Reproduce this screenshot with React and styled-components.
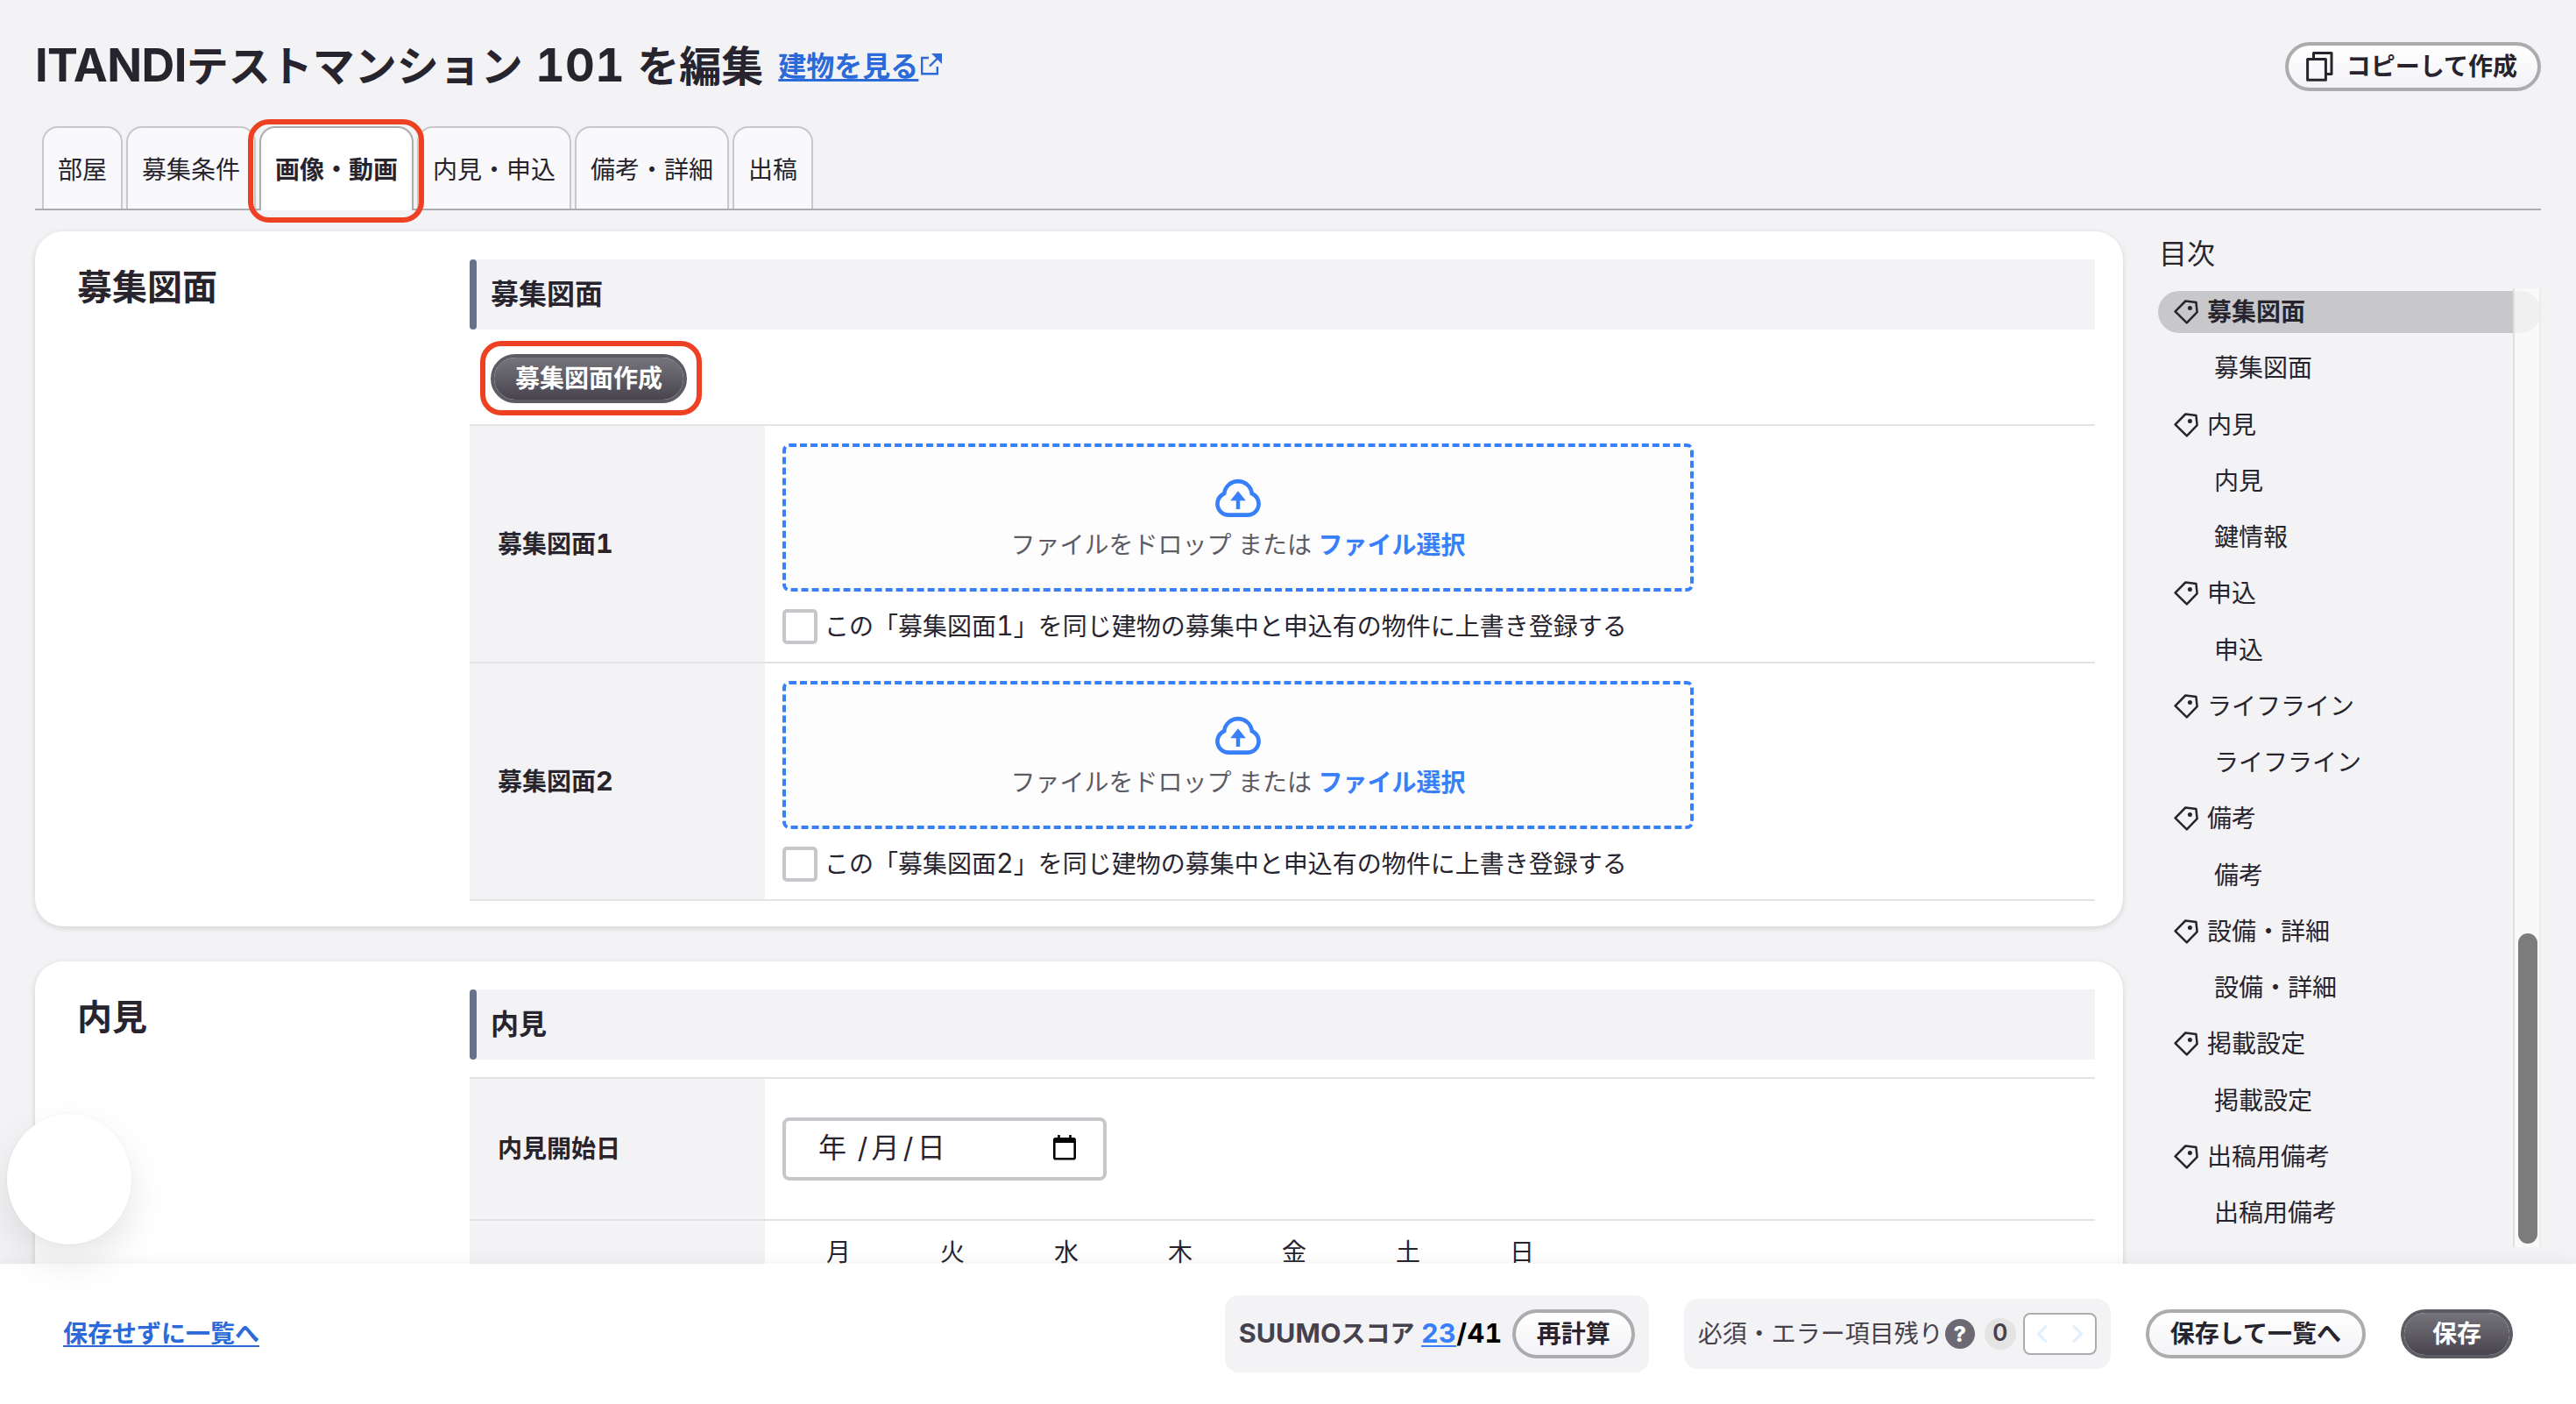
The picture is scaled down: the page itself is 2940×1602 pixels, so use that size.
import React from 'react';
import styled, { createGlobalStyle, css } from 'styled-components';

const colors = {
  text: '#27242e',
  muted: '#45424d',
  bg: '#f3f3f5',
  line: '#e3e3e5',
  border: '#acacae',
  inputBorder: '#c6c6cb',
  link: '#2b6ad8',
  blue: '#387ffa',
  mark: '#ee4023',
};

const GlobalStyle = createGlobalStyle`
  * {
    box-sizing: border-box;
  }
  body {
    margin: 0;
    background: ${colors.bg};
    color: ${colors.text};
    font-family: Inter, 'Noto Sans CJK JP', sans-serif;
    font-size: 28px;
    line-height: 40px;
    font-variant-numeric: tabular-nums;
  }
`;

const Page = styled.div`
  position: relative;
  display: flex;
  flex-direction: column;
  width: 2940px;
  height: 1602px;
  overflow: hidden;
`;

const Header = styled.header`
  display: flex;
  align-items: center;
  justify-content: space-between;
  padding: 48px 40px 40px;
`;

const Title = styled.h1`
  display: flex;
  align-items: center;
  gap: 17px;
  margin: 0;
  font-size: 48px;
  line-height: 56px;
  font-weight: 700;
  white-space: pre;
`;

// Latin letters and digits are drawn a little larger than the kana beside them
const Latin = styled.span`
  font-size: 1.09em;
  line-height: 1;
  letter-spacing: ${props => props.$spacing || 0}px;
`;

const TextLink = styled.a`
  color: ${props => props.$color || colors.link};
  font-size: ${props => props.$size || 28}px;
  font-weight: 700;
  text-decoration: underline;
  text-decoration-thickness: ${props => props.$thickness || 2}px;
  text-decoration-skip-ink: none;
  text-underline-offset: ${props => props.$offset || 3}px;
`;

const BuildingLink = styled.span`
  display: flex;
  align-items: center;
  gap: 3px;
  svg {
    margin-top: -6px;
  }
`;

const Button = styled.button`
  display: inline-flex;
  align-items: center;
  justify-content: center;
  height: 56px;
  min-width: 128px;
  padding: 0 24px;
  border: 4px solid ${colors.border};
  border-radius: 28px;
  background: linear-gradient(#ffffff, #f3f3f6) padding-box;
  color: ${colors.text};
  font: inherit;
  font-weight: 700;
  line-height: 40px;
  white-space: nowrap;
  svg {
    margin-right: 15px;
    margin-left: -4px;
  }
  ${props => props.$icon && 'padding-right: 23px;'}
  ${props => props.$dark && css`
    border-color: #5d5b63;
    background: linear-gradient(#76747b, #48444e) padding-box;
    color: #fff;
  `}
`;

const Tabs = styled.nav`
  position: relative;
  z-index: 1;
  display: flex;
  gap: 4px;
  height: 96px;
  margin: 0 40px;
  padding-left: 8px;
  border-bottom: 2px solid ${colors.border};
`;

const Tab = styled.div`
  display: flex;
  align-items: center;
  height: 94px;
  padding: 3px 16px 0;
  border: 2px solid #c8c8cb;
  border-bottom: 0;
  border-radius: 18px 18px 0 0;
  background: #f9f9fb;
  white-space: nowrap;
  ${props => props.$active && css`
    position: relative;
    z-index: 1;
    height: 96px;
    padding-top: 1px;
    border-color: ${colors.border};
    background: #fff;
    font-weight: 700;
  `}
`;

const Mark = styled.span`
  position: absolute;
  inset: ${props => props.$inset};
  border: 6px solid ${colors.mark};
  border-radius: 24px;
  pointer-events: none;
`;

const Body = styled.div`
  display: flex;
  flex: 1;
  gap: 40px;
  min-height: 0;
  padding: 24px 40px 0;
  overflow: hidden;
`;

const Sections = styled.main`
  display: flex;
  flex-direction: column;
  gap: 40px;
  width: 2383px;
`;

const Card = styled.section`
  display: flex;
  flex-shrink: 0;
  padding: 32px 32px 29px 48px;
  border-radius: 32px;
  background: #fff;
  box-shadow: 0 2px 6px rgba(39, 36, 46, 0.16);
`;

const CardTitle = styled.h2`
  width: 448px;
  margin: 0;
  padding-top: 4px;
  font-size: 40px;
  line-height: 56px;
`;

const CardContent = styled.div`
  flex: 1;
`;

const GroupTitle = styled.h3`
  display: flex;
  align-items: center;
  height: 80px;
  margin: 0;
  background: ${colors.bg};
  font-size: 32px;
  &::before {
    content: '';
    width: 8px;
    height: 80px;
    margin-right: 16px;
    border-radius: 4px;
    background: #68718b;
  }
`;

const GroupAction = styled.div`
  padding: 28px 24px 24px;
  line-height: 0;
`;

const Marked = styled.span`
  position: relative;
  display: inline-flex;
`;

const Table = styled.div`
  margin-top: ${props => props.$top || 0}px;
  border-top: 2px solid ${colors.line};
`;

const Row = styled.div`
  display: flex;
  border-bottom: 2px solid ${colors.line};
`;

const RowLabel = styled.div`
  display: flex;
  align-items: center;
  width: 337px;
  padding-left: 32px;
  background: ${colors.bg};
  font-weight: 700;
`;

const RowValue = styled.div`
  display: flex;
  flex: 1;
  flex-direction: column;
  align-items: flex-start;
  justify-content: center;
  gap: 20px;
  min-height: ${props => props.$height || 0}px;
  padding: 20px;
`;

const DropZone = styled.div`
  display: flex;
  flex-direction: column;
  align-items: center;
  gap: 12px;
  width: 1040px;
  height: 169px;
  padding-top: 36px;
  border: 4px dashed ${colors.blue};
  border-radius: 8px;
  background: #fdfdfe;
  color: #5d5b63;
  white-space: pre;
  b {
    color: ${colors.blue};
  }
`;

const CheckLabel = styled.label`
  display: flex;
  align-items: center;
  gap: 8px;
  white-space: nowrap;
`;

const CheckBox = styled.span`
  width: 40px;
  height: 40px;
  border: 4px solid ${colors.inputBorder};
  border-radius: 5px;
  background: #fff;
`;

const DateInput = styled.div`
  display: flex;
  align-items: center;
  justify-content: space-between;
  width: 370px;
  height: 72px;
  padding: 0 31px 3px 37px;
  border: 4px solid ${colors.inputBorder};
  border-radius: 8px;
  font-size: 32px;
  white-space: pre;
`;

const Slash = styled.span`
  display: inline-block;
  width: 20px;
  text-align: center;
`;

const Weekdays = styled.div`
  display: grid;
  grid-template-columns: repeat(7, 130px);
  text-align: center;
  margin-left: -1px;
  margin-top: -4px;
`;

const Toc = styled.aside`
  flex: 1;
`;

const TocTitle = styled.div`
  height: 41px;
  padding: 4px 1px 0;
  font-size: 32px;
  line-height: 44px;
`;

const TocScroll = styled.div`
  position: relative;
  height: 1094px;
  margin-top: 24px;
  padding-top: 3px;
`;

const TocList = styled.ul`
  display: flex;
  flex-direction: column;
  gap: 16px;
  margin: 0;
  padding: 0;
  list-style: none;
`;

const TocItem = styled.li`
  display: flex;
  align-items: center;
  gap: 10px;
  height: 48.25px;
  padding-left: ${props => (props.$child ? 64 : 18)}px;
  border-radius: 24px;
  background: ${props => (props.$active ? '#c8c8ca' : 'none')};
  font-weight: ${props => (props.$active ? 700 : 400)};
`;

const ScrollTrack = styled.div`
  position: absolute;
  top: 0;
  right: 0;
  width: 32px;
  height: 100%;
  padding: 736px 0 0 4px;
  border-left: 2px solid #dfdfe0;
  border-right: 2px solid #ececed;
  background: rgba(250, 250, 250, 0.8);
  &::before {
    content: '';
    display: block;
    width: 22px;
    height: 354px;
    border-radius: 11px;
    background: #7c7c7c;
  }
`;

const Footer = styled.footer`
  position: relative;
  display: flex;
  align-items: center;
  gap: 40px;
  height: 160px;
  padding: 0 72px;
  background: #fff;
  box-shadow: 0 0 16px rgba(39, 36, 46, 0.08);
`;

const Spacer = styled.div`
  flex: 1;
`;

const Panel = styled.div`
  display: flex;
  align-items: center;
  height: ${props => props.$height}px;
  padding: 0 16px;
  border-radius: 16px;
  background: ${colors.bg};
  color: ${colors.muted};
  white-space: pre;
`;

const Score = styled.span`
  width: 312px;
  font-weight: 700;
  em {
    color: #000;
    font-style: normal;
  }
`;

const Help = styled.span`
  display: grid;
  place-items: center;
  width: 34px;
  height: 34px;
  margin: 0 11px 0 2px;
  border-radius: 50%;
  background: #6c6973;
  color: #fff;
  font-size: 25px;
  line-height: 32px;
  font-weight: 800;
`;

const Count = styled.span`
  display: grid;
  place-items: start center;
  width: 36px;
  height: 36px;
  margin-right: 8px;
  border-radius: 50%;
  background: #e4e4e5;
  font-size: 27px;
  line-height: 34px;
  font-weight: 600;
`;

const Pager = styled.span`
  display: flex;
  align-items: center;
  justify-content: space-between;
  width: 84px;
  height: 48px;
  padding: 0 13px;
  border: 2px solid ${colors.border};
  border-radius: 8px;
  background: #fff;
`;

const FloatingButton = styled.div`
  position: absolute;
  left: 8px;
  top: 1271px;
  width: 142px;
  height: 149px;
  border-radius: 50%;
  background: #fff;
  box-shadow: 0 20px 44px rgba(0, 0, 0, 0.1), 0 0 3px rgba(0, 0, 0, 0.05);
`;

const ExternalIcon = () => (
  <svg width="24" height="25" viewBox="0 0 24 25" fill="none" stroke={colors.link} strokeWidth="2.4">
    <path d="M9 5H1.2V23.3H18.8V15M10 14.5 19 5.5" />
    <path d="M12 0H24V12Z" fill={colors.link} stroke="none" />
  </svg>
);

const CopyIcon = () => (
  <svg width="31" height="34" viewBox="0 0 31 34" fill="none" stroke={colors.text} strokeWidth="3" strokeLinejoin="round">
    <path d="M8.5 8V1.6H29V25.5H23" />
    <path d="M1.6 8.5H22.4V32.2H1.6Z" />
  </svg>
);

const CloudIcon = () => (
  <svg width="52" height="44" viewBox="0 0 52 44" fill="none" stroke={colors.blue} strokeWidth="4.6">
    <path d="M15 41.6A12.7 12.7 0 0 1 10.2 17.2A15.9 15.9 0 0 1 41.8 17.2A12.7 12.7 0 0 1 37 41.6Z" />
    <path d="M26 14.3 34.8 25.3H28.2V35H23.8V25.3H17.2Z" fill={colors.blue} stroke="none" />
  </svg>
);

const TagIcon = () => (
  <svg width="28" height="28" viewBox="0 0 28 28" fill="none" stroke={colors.text} strokeWidth="2.5" strokeLinejoin="round">
    <path d="M1.6 13.4 13.3 1.5 25.4 3 26.6 14.2 14.8 26.3Z" />
    <circle cx="18.4" cy="9.5" r="2.5" fill={colors.text} stroke="none" />
  </svg>
);

const CalendarIcon = () => (
  <svg width="26" height="29" viewBox="0 0 26 29" fill="none" stroke="#000" strokeWidth="2.6">
    <rect x="1.3" y="4.3" width="23.4" height="23" rx="1.5" />
    <path d="M1.3 3.5H24.7V9H1.3Z" fill="#000" stroke="none" />
    <path d="M6.5 0V4M19.5 0V4" />
  </svg>
);

const Chevron = ({ right }) => (
  <svg width="14" height="22" viewBox="0 0 14 22" fill="none" stroke="#e1f0ff" strokeWidth="3.2">
    <path d={right ? 'M2 1.5 11.5 11 2 20.5' : 'M12 1.5 2.5 11 12 20.5'} />
  </svg>
);

const tabs = ['部屋', '募集条件', '画像・動画', '内見・申込', '備考・詳細', '出稿'];
const weekdays = ['月', '火', '水', '木', '金', '土', '日'];
const toc = [
  { name: '募集図面', children: ['募集図面'] },
  { name: '内見', children: ['内見', '鍵情報'] },
  { name: '申込', children: ['申込'] },
  { name: 'ライフライン', children: ['ライフライン'] },
  { name: '備考', children: ['備考'] },
  { name: '設備・詳細', children: ['設備・詳細'] },
  { name: '掲載設定', children: ['掲載設定'] },
  { name: '出稿用備考', children: ['出稿用備考'] },
];

const FloorPlanRow = ({ no }) => (
  <Row>
    <RowLabel>募集図面<Latin>{no}</Latin></RowLabel>
    <RowValue>
      <DropZone>
        <CloudIcon />
        <div>ファイルをドロップ または <b>ファイル選択</b></div>
      </DropZone>
      <CheckLabel>
        <CheckBox />
        <span>この「募集図面<Latin>{no}</Latin>」を同じ建物の募集中と申込有の物件に上書き登録する</span>
      </CheckLabel>
    </RowValue>
  </Row>
);

const TableOfContents = () => (
  <Toc>
    <TocTitle>目次</TocTitle>
    <TocScroll>
      <TocList>
        {toc.map((section, i) => (
          <React.Fragment key={section.name}>
            <TocItem $active={i === 0}><TagIcon />{section.name}</TocItem>
            {section.children.map(child => (
              <TocItem key={child} $child>{child}</TocItem>
            ))}
          </React.Fragment>
        ))}
      </TocList>
      <ScrollTrack />
    </TocScroll>
  </Toc>
);

export default function App() {
  return (
    <Page>
      <GlobalStyle />
      <Header>
        <Title>
          <span>
            <Latin $spacing={-0.6}>ITANDI</Latin>テストマンション<Latin $spacing={0.2}> 101 </Latin>を編集
          </span>
          <BuildingLink>
            <TextLink $size={32} $thickness={3} $offset={3}>建物を見る</TextLink>
            <ExternalIcon />
          </BuildingLink>
        </Title>
        <Button $icon><CopyIcon />コピーして作成</Button>
      </Header>
      <Tabs>
        {tabs.map(tab => {
          const active = tab === '画像・動画';
          return (
            <Tab key={tab} $active={active}>
              {tab}
              {active && <Mark $inset="-10px -14px -14px -15px" />}
            </Tab>
          );
        })}
      </Tabs>
      <Body>
        <Sections>
          <Card>
            <CardTitle>募集図面</CardTitle>
            <CardContent>
              <GroupTitle>募集図面</GroupTitle>
              <GroupAction>
                <Marked>
                  <Button $dark>募集図面作成</Button>
                  <Mark $inset="-15px -17px -14px -12px" />
                </Marked>
              </GroupAction>
              <Table>
                <FloorPlanRow no={1} />
                <FloorPlanRow no={2} />
              </Table>
            </CardContent>
          </Card>
          <Card>
            <CardTitle>内見</CardTitle>
            <CardContent>
              <GroupTitle>内見</GroupTitle>
              <Table $top={20}>
                <Row>
                  <RowLabel>内見開始日</RowLabel>
                  <RowValue $height={160}>
                    <DateInput>
                      <span>年 <Slash>/</Slash>月<Slash>/</Slash>日</span>
                      <CalendarIcon />
                    </DateInput>
                  </RowValue>
                </Row>
                <Row>
                  <RowLabel />
                  <RowValue>
                    <Weekdays>
                      {weekdays.map(day => <span key={day}>{day}</span>)}
                    </Weekdays>
                  </RowValue>
                </Row>
              </Table>
            </CardContent>
          </Card>
        </Sections>
        <TableOfContents />
      </Body>
      <Footer>
        <TextLink>保存せずに一覧へ</TextLink>
        <Spacer />
        <Panel $height={88}>
          <Score>
            <Latin>SUUMO</Latin>スコア <TextLink $color={colors.blue}><Latin $spacing={0.4}>23</Latin></TextLink><em><Latin $spacing={0.4}>/41</Latin></em>
          </Score>
          <Button>再計算</Button>
        </Panel>
        <Panel $height={80}>
          必須・エラー項目残り
          <Help>?</Help>
          <Count>0</Count>
          <Pager>
            <Chevron />
            <Chevron right />
          </Pager>
        </Panel>
        <Button>保存して一覧へ</Button>
        <Button $dark>保存</Button>
      </Footer>
      <FloatingButton />
    </Page>
  );
}
